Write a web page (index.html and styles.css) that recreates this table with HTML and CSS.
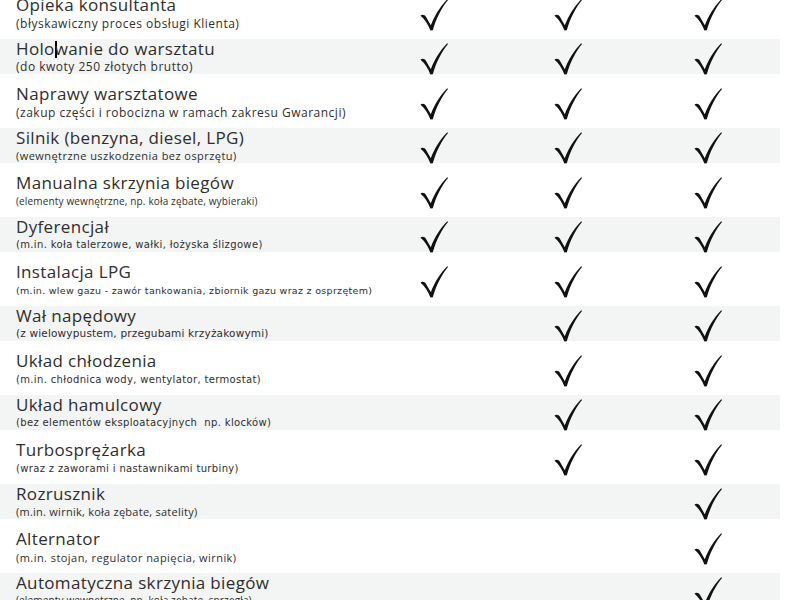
FILE: index.html
```html
<!DOCTYPE html>
<html lang="pl">
<head>
<meta charset="utf-8">
<title>Zakres ochrony</title>
<link rel="stylesheet" href="styles.css">
</head>
<body>
<svg class="defs" width="0" height="0" aria-hidden="true">
  <symbol id="chk" viewBox="0 0 28 32">
    <path d="M0.5 16.8 C2 15.2 4.6 15.6 6.2 18.2 L10.8 26.2 C14.2 17.2 19.6 8 27.2 0.3 L28 1.1 C21.6 9 16.4 19 12.8 31.2 L10.4 31.6 C8 25.2 4.6 20.2 0.5 16.8 Z"/>
  </symbol>
</svg>
<div class="table">
  <div class="row">
    <div class="label"><div class="title">Opieka konsultanta</div><div class="sub sub-lg">(błyskawiczny proces obsługi Klienta)</div></div>
    <div class="cell"><svg class="chk"><use href="#chk"/></svg></div>
    <div class="cell"><svg class="chk"><use href="#chk"/></svg></div>
    <div class="cell"><svg class="chk"><use href="#chk"/></svg></div>
  </div>
  <div class="row alt">
    <div class="label"><div class="title">Holo<span class="caret"></span>wanie do warsztatu</div><div class="sub sub-lg">(do kwoty 250 złotych brutto)</div></div>
    <div class="cell"><svg class="chk"><use href="#chk"/></svg></div>
    <div class="cell"><svg class="chk"><use href="#chk"/></svg></div>
    <div class="cell"><svg class="chk"><use href="#chk"/></svg></div>
  </div>
  <div class="row">
    <div class="label"><div class="title">Naprawy warsztatowe</div><div class="sub sub-lg">(zakup części i robocizna w ramach zakresu Gwarancji)</div></div>
    <div class="cell"><svg class="chk"><use href="#chk"/></svg></div>
    <div class="cell"><svg class="chk"><use href="#chk"/></svg></div>
    <div class="cell"><svg class="chk"><use href="#chk"/></svg></div>
  </div>
  <div class="row alt">
    <div class="label"><div class="title">Silnik (benzyna, diesel, LPG)</div><div class="sub sub-md">(wewnętrzne uszkodzenia bez osprzętu)</div></div>
    <div class="cell"><svg class="chk"><use href="#chk"/></svg></div>
    <div class="cell"><svg class="chk"><use href="#chk"/></svg></div>
    <div class="cell"><svg class="chk"><use href="#chk"/></svg></div>
  </div>
  <div class="row">
    <div class="label"><div class="title">Manualna skrzynia biegów</div><div class="sub sub-sm">(elementy wewnętrzne, np. koła zębate, wybieraki)</div></div>
    <div class="cell"><svg class="chk"><use href="#chk"/></svg></div>
    <div class="cell"><svg class="chk"><use href="#chk"/></svg></div>
    <div class="cell"><svg class="chk"><use href="#chk"/></svg></div>
  </div>
  <div class="row alt">
    <div class="label"><div class="title">Dyferencjał</div><div class="sub sub-v">(m.in. koła talerzowe, wałki, łożyska ślizgowe)</div></div>
    <div class="cell"><svg class="chk"><use href="#chk"/></svg></div>
    <div class="cell"><svg class="chk"><use href="#chk"/></svg></div>
    <div class="cell"><svg class="chk"><use href="#chk"/></svg></div>
  </div>
  <div class="row">
    <div class="label"><div class="title">Instalacja LPG</div><div class="sub sub-vs">(m.in. wlew gazu - zawór tankowania, zbiornik gazu wraz z osprzętem)</div></div>
    <div class="cell"><svg class="chk"><use href="#chk"/></svg></div>
    <div class="cell"><svg class="chk"><use href="#chk"/></svg></div>
    <div class="cell"><svg class="chk"><use href="#chk"/></svg></div>
  </div>
  <div class="row alt">
    <div class="label"><div class="title">Wał napędowy</div><div class="sub sub-vl">(z wielowypustem, przegubami krzyżakowymi)</div></div>
    <div class="cell"></div>
    <div class="cell"><svg class="chk"><use href="#chk"/></svg></div>
    <div class="cell"><svg class="chk"><use href="#chk"/></svg></div>
  </div>
  <div class="row">
    <div class="label"><div class="title">Układ chłodzenia</div><div class="sub sub-v">(m.in. chłodnica wody, wentylator, termostat)</div></div>
    <div class="cell"></div>
    <div class="cell"><svg class="chk"><use href="#chk"/></svg></div>
    <div class="cell"><svg class="chk"><use href="#chk"/></svg></div>
  </div>
  <div class="row alt">
    <div class="label"><div class="title">Układ hamulcowy</div><div class="sub sub-v">(bez elementów eksploatacyjnych&nbsp; np. klocków)</div></div>
    <div class="cell"></div>
    <div class="cell"><svg class="chk"><use href="#chk"/></svg></div>
    <div class="cell"><svg class="chk"><use href="#chk"/></svg></div>
  </div>
  <div class="row">
    <div class="label"><div class="title">Turbosprężarka</div><div class="sub sub-v">(wraz z zaworami i nastawnikami turbiny)</div></div>
    <div class="cell"></div>
    <div class="cell"><svg class="chk"><use href="#chk"/></svg></div>
    <div class="cell"><svg class="chk"><use href="#chk"/></svg></div>
  </div>
  <div class="row alt">
    <div class="label"><div class="title">Rozrusznik</div><div class="sub sub-xl">(m.in. wirnik, koła zębate, satelity)</div></div>
    <div class="cell"></div>
    <div class="cell"></div>
    <div class="cell"><svg class="chk"><use href="#chk"/></svg></div>
  </div>
  <div class="row">
    <div class="label"><div class="title">Alternator</div><div class="sub sub-md">(m.in. stojan, regulator napięcia, wirnik)</div></div>
    <div class="cell"></div>
    <div class="cell"></div>
    <div class="cell"><svg class="chk"><use href="#chk"/></svg></div>
  </div>
  <div class="row alt">
    <div class="label"><div class="title">Automatyczna skrzynia biegów</div><div class="sub sub-sm">(elementy wewnętrzne, np. koła zębate, sprzęgła)</div></div>
    <div class="cell"></div>
    <div class="cell"></div>
    <div class="cell"><svg class="chk"><use href="#chk"/></svg></div>
  </div>
</div>
</body>
</html>
```

FILE: styles.css
```css
html, body {
  margin: 0;
  padding: 0;
  background: #ffffff;
}

body {
  font-family: "Open Sans", "Liberation Sans", sans-serif;
  color: #2e2e2e;
  overflow: hidden;
}

.defs {
  position: absolute;
  width: 0;
  height: 0;
}

.table {
  width: 780px;
  margin-top: -15px;
  display: flex;
  flex-direction: column;
}

.row {
  display: grid;
  grid-template-columns: 367px 134px 134px 145px;
  align-items: center;
  height: 54px;
  box-sizing: border-box;
  padding: 10px 0 8px;
}

.row.alt {
  background: #f3f4f4;
  height: 35px;
  padding: 0;
}

.label {
  padding-left: 16px;
  align-self: start;
}

.title {
  font-size: 17px;
  line-height: 20px;
  letter-spacing: 0.35px;
  white-space: nowrap;
}

.sub {
  line-height: 15px;
  margin-top: 1px;
  white-space: nowrap;
}

.row.alt .sub {
  margin-top: 0;
}

.sub-lg { font-size: 12px; letter-spacing: 0.5px; }
.sub-md { font-size: 11px; letter-spacing: 0.45px; }
.sub-sm { font-size: 10px; letter-spacing: 0.15px; }
.sub-xl { font-size: 11px; letter-spacing: 0.25px; }
.sub-v {
  font-family: "DejaVu Sans", Verdana, sans-serif;
  font-size: 10px;
  letter-spacing: 0.35px;
}
.sub-vs {
  font-family: "DejaVu Sans", Verdana, sans-serif;
  font-size: 9.5px;
  letter-spacing: 0.3px;
}
.sub-vl {
  font-family: "DejaVu Sans", Verdana, sans-serif;
  font-size: 10.5px;
  letter-spacing: 0.17px;
}

.caret {
  display: inline-block;
  width: 0;
  height: 17px;
  border-left: 2px solid #000;
  margin-right: -2px;
  vertical-align: -3px;
}

.cell {
  display: flex;
  justify-content: center;
  align-items: center;
}

.chk {
  width: 28px;
  height: 32px;
  fill: #111;
  transform: translateY(2px);
}
```
